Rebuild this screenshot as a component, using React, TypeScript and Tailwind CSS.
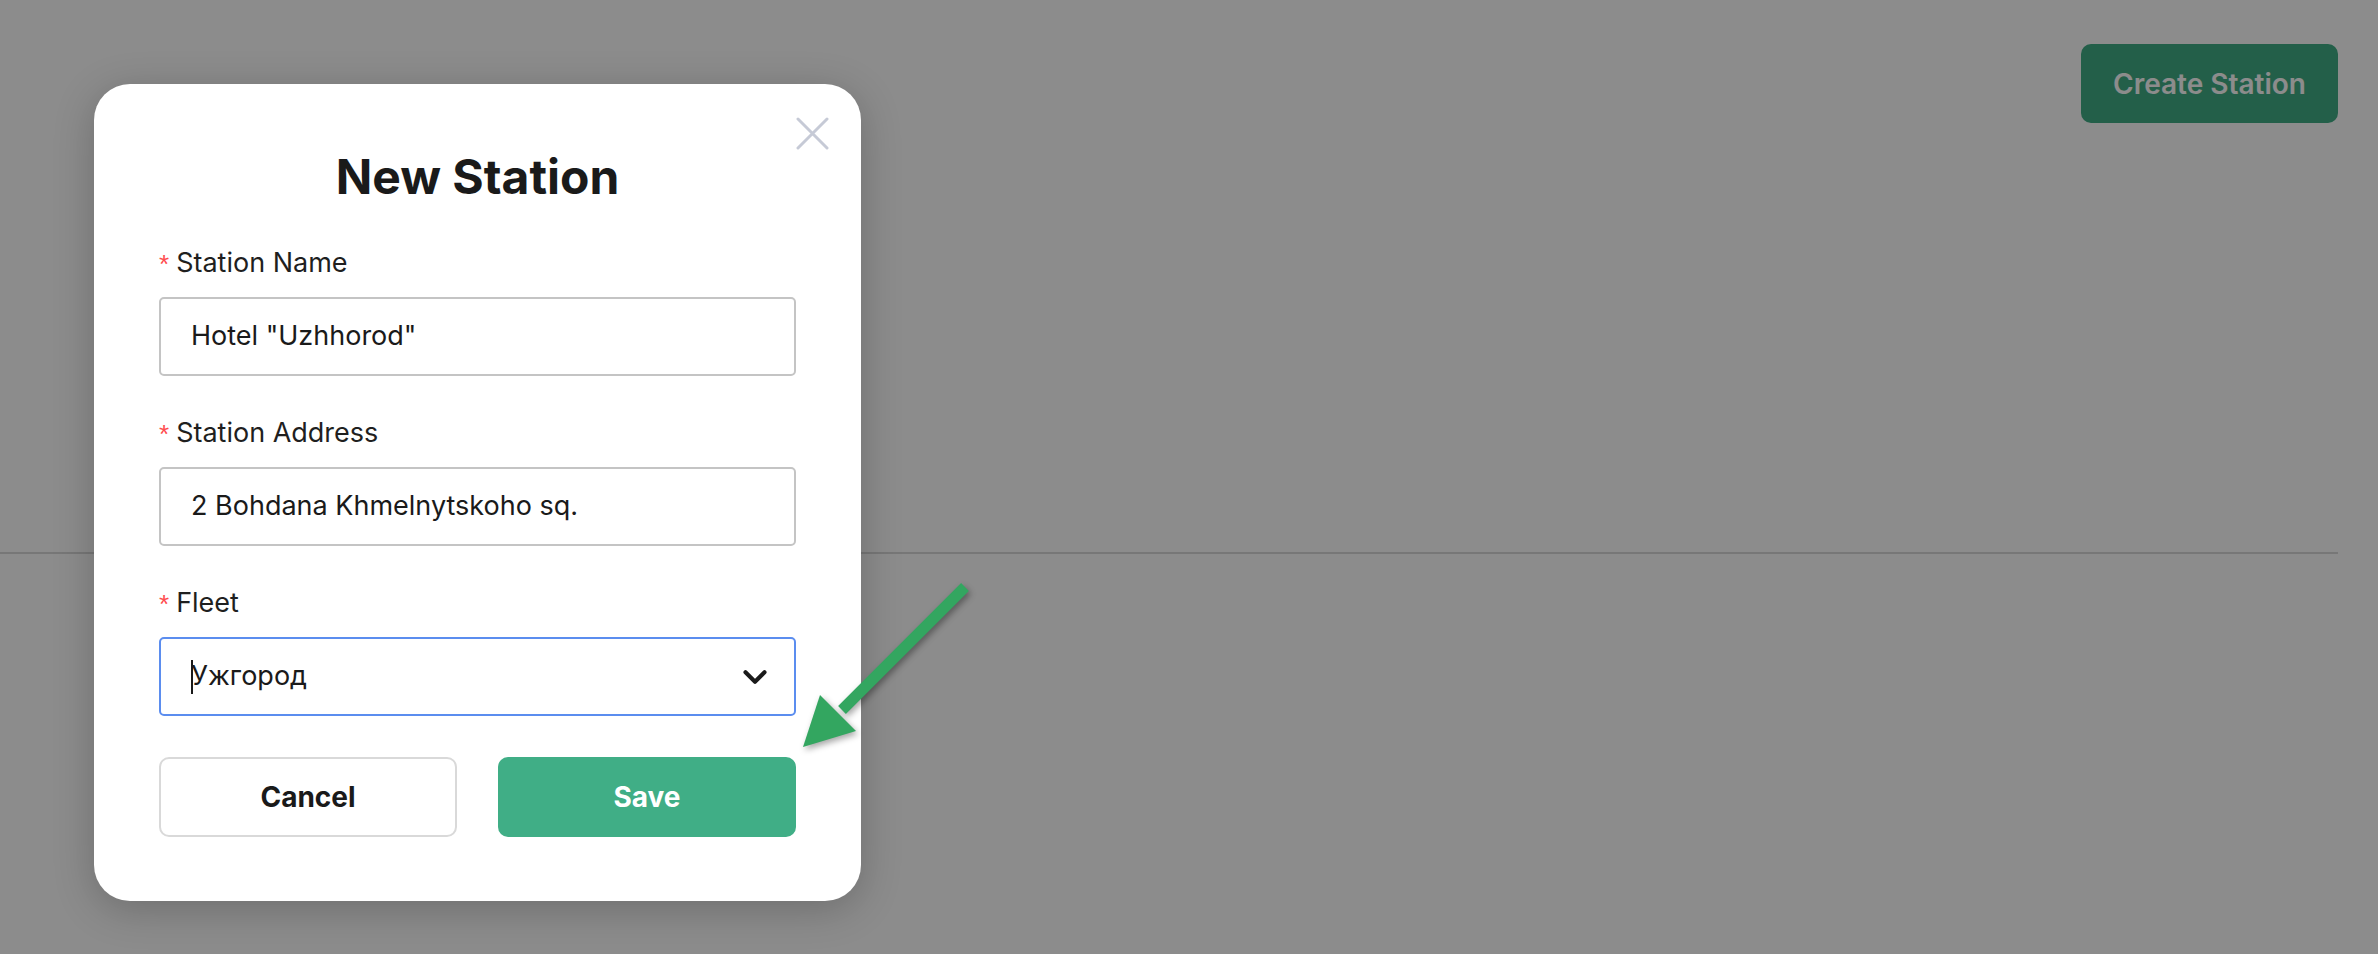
import { ChevronDown } from 'lucide-react'

type FieldProps = {
  label: string
  children: React.ReactNode
}

function Field({ label, children }: FieldProps) {
  return (
    <div className="mt-[36px]">
      <label className="flex items-center text-[27px] leading-[42px] text-[#1f1f1f]">
        <span className="mr-[7px] mt-[9px] self-start font-['Liberation_Sans',sans-serif] text-[26px] leading-none text-[#ff4d4f]">
          *
        </span>
        {label}
      </label>
      <div className="mt-[13px]">{children}</div>
    </div>
  )
}

function TextInput({ value }: { value: string }) {
  return (
    <div className="flex h-[79px] w-full items-center rounded-[5px] border-2 border-[#c4c4c4] bg-white pl-[30px] text-[27px] text-[#1a1a1a]">
      {value}
    </div>
  )
}

export default function App() {
  return (
    <div className="relative h-[954px] w-full overflow-hidden bg-white font-['Inter','Noto_Sans',sans-serif]">
      {/* page under the dialog */}
      <div className="flex flex-col">
        <div className="flex justify-end pr-[40px] pt-[44px]">
          <button
            type="button"
            className="flex h-[79px] w-[257px] items-center justify-center rounded-[10px] bg-[#40ae86] text-[28px] font-semibold text-white"
          >
            Create Station
          </button>
        </div>
        <div className="mr-[40px] mt-[429px] h-[2px] bg-[#d9d9d9]" />
      </div>

      {/* overlay */}
      <div className="absolute inset-0 bg-black/45" />

      {/* dialog */}
      <div className="absolute left-[94px] top-[84px] w-[767px] rounded-[36px] bg-white px-[65px] pb-[64px] pt-[64px] shadow-[0_8px_40px_rgba(0,0,0,0.22)]">
        <button type="button" aria-label="Close" className="absolute right-[32px] top-[33px] h-[33px] w-[33px]">
          <svg viewBox="0 0 33 33" className="h-full w-full">
            <path d="M2 2 L31 31 M31 2 L2 31" stroke="#c6cad6" strokeWidth="3" strokeLinecap="round" />
          </svg>
        </button>

        <h2 className="text-center text-[48px] font-bold leading-[58px] text-[#1a1a1a]">New Station</h2>

        <Field label="Station Name">
          <TextInput value={'Hotel "Uzhhorod"'} />
        </Field>

        <Field label="Station Address">
          <TextInput value="2 Bohdana Khmelnytskoho sq." />
        </Field>

        <Field label="Fleet">
          <div className="flex h-[79px] w-full items-center justify-between rounded-[5px] border-2 border-[#5b8def] bg-white pl-[30px] pr-[20px] text-[27px] text-[#1a1a1a]">
            <span className="flex items-center">
              <span className="-mr-[2px] h-[34px] w-[2px] bg-[#1a1a1a]" />
              Ужгород
            </span>
            <ChevronDown size={38} strokeWidth={2.6} color="#1a1a1a" />
          </div>
        </Field>

        <div className="mt-[41px] grid grid-cols-2 gap-[41px]">
          <button
            type="button"
            className="flex h-[80px] items-center justify-center rounded-[10px] border-2 border-[#d9d9d9] bg-white text-[28px] font-bold text-[#1a1a1a]"
          >
            Cancel
          </button>
          <button
            type="button"
            className="flex h-[80px] items-center justify-center rounded-[10px] bg-[#40ae86] text-[28px] font-bold text-white"
          >
            Save
          </button>
        </div>
      </div>

      {/* annotation arrow */}
      <svg
        className="pointer-events-none absolute inset-0 h-[954px] w-[2378px] drop-shadow-[2px_3px_3px_rgba(0,0,0,0.35)]"
        viewBox="0 0 2378 954"
      >
        <line x1="965" y1="587" x2="842" y2="710" stroke="#33a660" strokeWidth="11" />
        <polygon points="803,747 820,695 856,731" fill="#33a660" />
      </svg>
    </div>
  )
}
